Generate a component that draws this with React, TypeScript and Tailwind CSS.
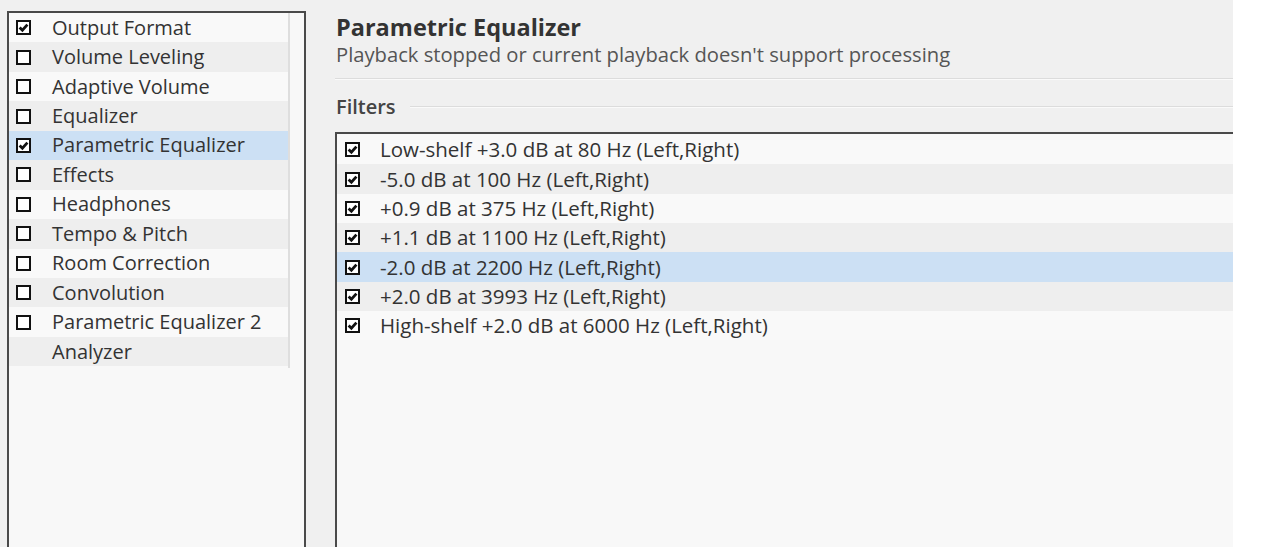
const sections = [
  { label: 'Output Format', checked: true },
  { label: 'Volume Leveling', checked: false },
  { label: 'Adaptive Volume', checked: false },
  { label: 'Equalizer', checked: false },
  { label: 'Parametric Equalizer', checked: true, selected: true },
  { label: 'Effects', checked: false },
  { label: 'Headphones', checked: false },
  { label: 'Tempo & Pitch', checked: false },
  { label: 'Room Correction', checked: false },
  { label: 'Convolution', checked: false },
  { label: 'Parametric Equalizer 2', checked: false },
  { label: 'Analyzer', checked: false, noBox: true },
];

const filters = [
  'Low-shelf +3.0 dB at 80 Hz (Left,Right)',
  '-5.0 dB at 100 Hz (Left,Right)',
  '+0.9 dB at 375 Hz (Left,Right)',
  '+1.1 dB at 1100 Hz (Left,Right)',
  '-2.0 dB at 2200 Hz (Left,Right)',
  '+2.0 dB at 3993 Hz (Left,Right)',
  'High-shelf +2.0 dB at 6000 Hz (Left,Right)',
];

const CheckBox = ({ checked }: { checked: boolean }) => (
  <div className="w-[15px] h-[15px] border-2 border-[#111] bg-white flex items-center justify-center shrink-0">
    {checked && (
      <svg width="11" height="11" viewBox="0 0 11 11">
        <path d="M1.6 5.4 L4.4 8.2 L9.4 2.6" fill="none" stroke="#111" strokeWidth="2.8" />
      </svg>
    )}
  </div>
);

export default function App() {
  return (
    <div
      className="w-[1263px] h-[547px] flex bg-white overflow-hidden text-[#333]"
      style={{ fontFamily: '"Open Sans", "Noto Sans", sans-serif' }}
    >
      <div className="w-[1233px] h-full flex bg-[#f0f0f0]">
        {/* left section list */}
        <div className="pl-[7px] pt-[11px] w-[306px] shrink-0 flex">
          <div className="flex-1 border-2 border-b-0 border-[#4a4a4a] bg-[#f8f8f8] flex">
            <div className="w-[279px] flex flex-col">
              {sections.map((s, i) => (
                <div
                  key={s.label}
                  className={
                    'h-[29.45px] flex items-center gap-[21px] pl-[7px] text-[20px] ' +
                    (s.selected ? 'bg-[#cce0f4]' : i % 2 === 1 ? 'bg-[#eeeeee]' : 'bg-[#f9f9f9]')
                  }
                >
                  {s.noBox ? <div className="w-[15px] shrink-0" /> : <CheckBox checked={s.checked} />}
                  <span className="leading-none">{s.label}</span>
                </div>
              ))}
            </div>
            <div className="w-[2px] h-[355px] border-l border-[#dedede] border-r bg-white" />
          </div>
        </div>

        {/* right content */}
        <div className="flex-1 pl-[29px] flex flex-col">
          <div className="pt-[12px] pl-[1px]">
            <div className="text-[23.5px] font-bold leading-[30px] text-[#333]">Parametric Equalizer</div>
            <div className="text-[20.2px] leading-[25px] text-[#555]">
              Playback stopped or current playback doesn't support processing
            </div>
          </div>
          <div className="mt-[11px] h-[2px] border-t border-[#dcdcdc] border-b border-b-[#fafafa]" />
          <div className="mt-[14px] flex items-center gap-[14px] pl-[1px]">
            <span className="text-[20px] font-semibold text-[#444] leading-[26px]">Filters</span>
            <div className="flex-1 h-[2px] border-t border-[#dcdcdc] border-b border-b-[#fafafa]" />
          </div>
          <div className="mt-[12px] flex-1 border-l-2 border-t-2 border-[#4a4a4a] bg-[#f8f8f8] pt-[1px]">
            {filters.map((f, i) => (
              <div
                key={f}
                className={
                  'h-[29.35px] flex items-center gap-[20px] pl-[8px] text-[20.5px] ' +
                  (i === 4 ? 'bg-[#cce0f4]' : i % 2 === 1 ? 'bg-[#eeeeee]' : 'bg-[#f9f9f9]')
                }
              >
                <CheckBox checked />
                <span className="leading-none">{f}</span>
              </div>
            ))}
          </div>
        </div>
      </div>
    </div>
  );
}
